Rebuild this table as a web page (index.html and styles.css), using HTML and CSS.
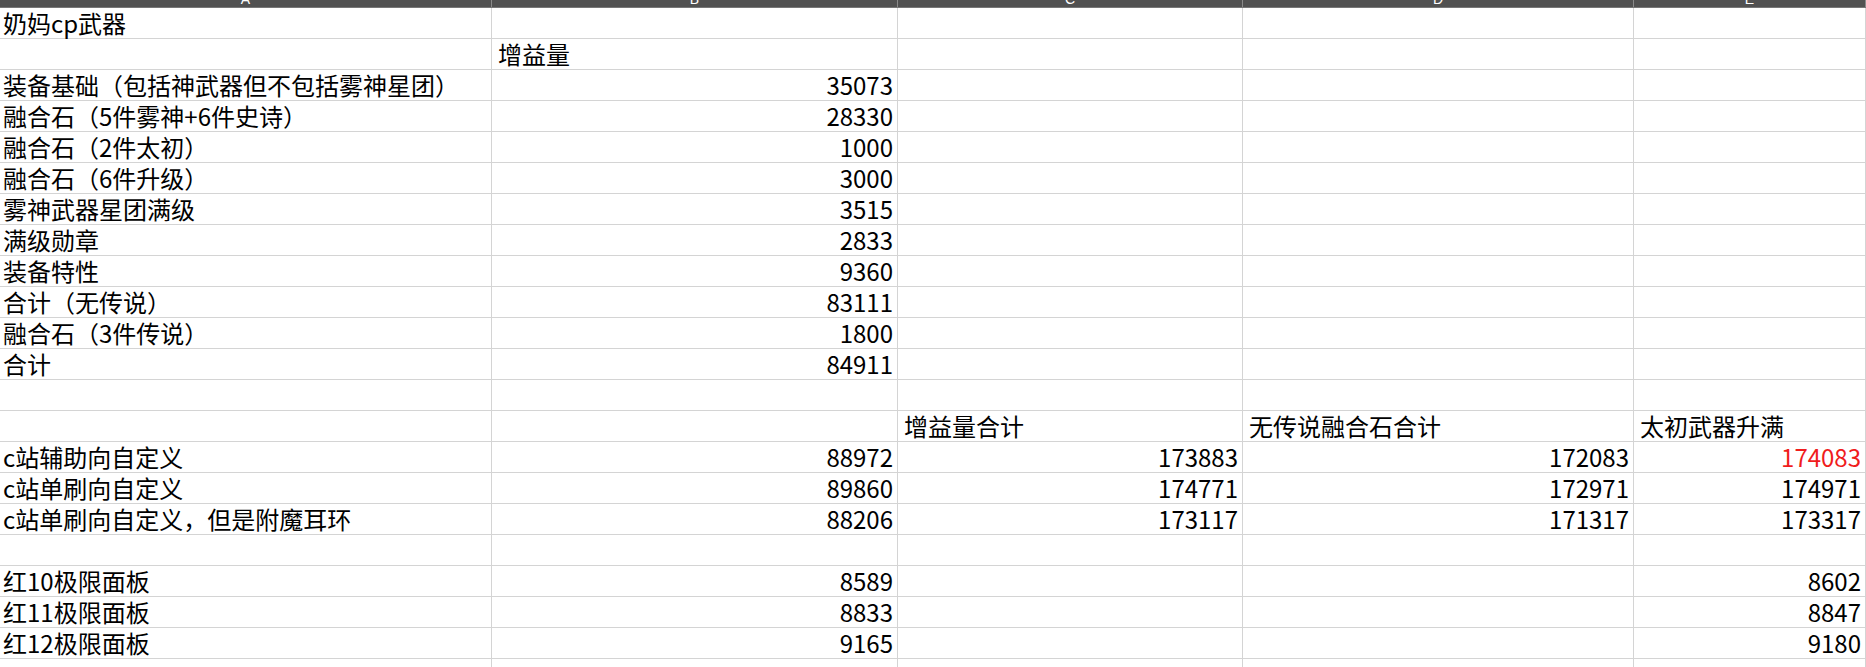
FILE: index.html
```html
<!DOCTYPE html>
<html lang="zh-CN">
<head>
<meta charset="utf-8">
<title>奶妈cp武器</title>
<link rel="stylesheet" href="styles.css">
</head>
<body>
<div class="sheet">
  <div class="colhead">
    <div class="ch ch-a"><span>A</span></div>
    <div class="ch ch-b"><span>B</span></div>
    <div class="ch ch-c"><span>C</span></div>
    <div class="ch ch-d"><span>D</span></div>
    <div class="ch ch-e"><span>E</span></div>
  </div>
  <div class="grid">
    <div class="c a">奶妈cp武器</div><div class="c"></div><div class="c"></div><div class="c"></div><div class="c"></div>
    <div class="c a"></div><div class="c">增益量</div><div class="c"></div><div class="c"></div><div class="c"></div>
    <div class="c a">装备基础（包括神武器但不包括雾神星团）</div><div class="c n">35073</div><div class="c"></div><div class="c"></div><div class="c"></div>
    <div class="c a">融合石（5件雾神+6件史诗）</div><div class="c n">28330</div><div class="c"></div><div class="c"></div><div class="c"></div>
    <div class="c a">融合石（2件太初）</div><div class="c n">1000</div><div class="c"></div><div class="c"></div><div class="c"></div>
    <div class="c a">融合石（6件升级）</div><div class="c n">3000</div><div class="c"></div><div class="c"></div><div class="c"></div>
    <div class="c a">雾神武器星团满级</div><div class="c n">3515</div><div class="c"></div><div class="c"></div><div class="c"></div>
    <div class="c a">满级勋章</div><div class="c n">2833</div><div class="c"></div><div class="c"></div><div class="c"></div>
    <div class="c a">装备特性</div><div class="c n">9360</div><div class="c"></div><div class="c"></div><div class="c"></div>
    <div class="c a">合计（无传说）</div><div class="c n">83111</div><div class="c"></div><div class="c"></div><div class="c"></div>
    <div class="c a">融合石（3件传说）</div><div class="c n">1800</div><div class="c"></div><div class="c"></div><div class="c"></div>
    <div class="c a">合计</div><div class="c n">84911</div><div class="c"></div><div class="c"></div><div class="c"></div>
    <div class="c a"></div><div class="c"></div><div class="c"></div><div class="c"></div><div class="c"></div>
    <div class="c a"></div><div class="c"></div><div class="c">增益量合计</div><div class="c">无传说融合石合计</div><div class="c">太初武器升满</div>
    <div class="c a">c站辅助向自定义</div><div class="c n">88972</div><div class="c n">173883</div><div class="c n">172083</div><div class="c n red">174083</div>
    <div class="c a">c站单刷向自定义</div><div class="c n">89860</div><div class="c n">174771</div><div class="c n">172971</div><div class="c n">174971</div>
    <div class="c a">c站单刷向自定义，但是附魔耳环</div><div class="c n">88206</div><div class="c n">173117</div><div class="c n">171317</div><div class="c n">173317</div>
    <div class="c a"></div><div class="c"></div><div class="c"></div><div class="c"></div><div class="c"></div>
    <div class="c a">红10极限面板</div><div class="c n">8589</div><div class="c"></div><div class="c"></div><div class="c n">8602</div>
    <div class="c a">红11极限面板</div><div class="c n">8833</div><div class="c"></div><div class="c"></div><div class="c n">8847</div>
    <div class="c a">红12极限面板</div><div class="c n">9165</div><div class="c"></div><div class="c"></div><div class="c n">9180</div>
    <div class="c a"></div><div class="c"></div><div class="c"></div><div class="c"></div><div class="c"></div>
  </div>
</div>
</body>
</html>
```
FILE: styles.css
```css
html, body {
  margin: 0;
  padding: 0;
  background: #ffffff;
  overflow: hidden;
}

.sheet {
  width: 1866px;
  font-family: "Noto Sans CJK SC", "Noto Sans", sans-serif;
  color: #000000;
}

.colhead {
  display: grid;
  grid-template-columns: 492px 406px 345px 391px 232px;
  height: 8px;
  background: #515151;
  border-bottom: 1px solid #777777;
  box-sizing: border-box;
  overflow: hidden;
}

.ch {
  border-right: 1px solid #8a8a8a;
  text-align: center;
  overflow: hidden;
  height: 7px;
}

.ch span {
  display: block;
  margin-top: -8px;
  font-family: "Liberation Sans", sans-serif;
  font-size: 14px;
  line-height: 14px;
  color: #ffffff;
}

.grid {
  display: grid;
  grid-template-columns: 492px 406px 345px 391px 232px;
  grid-auto-rows: 31px;
}

.c {
  box-sizing: border-box;
  border-right: 1px solid #d4d4d4;
  border-bottom: 1px solid #d4d4d4;
  font-size: 24px;
  line-height: 24px;
  padding: 3px 4px 0 6px;
  white-space: nowrap;
}

.c.a {
  padding-left: 3px;
}

.c.n {
  text-align: right;
}

.c.red {
  color: #f01c1c;
}
```
